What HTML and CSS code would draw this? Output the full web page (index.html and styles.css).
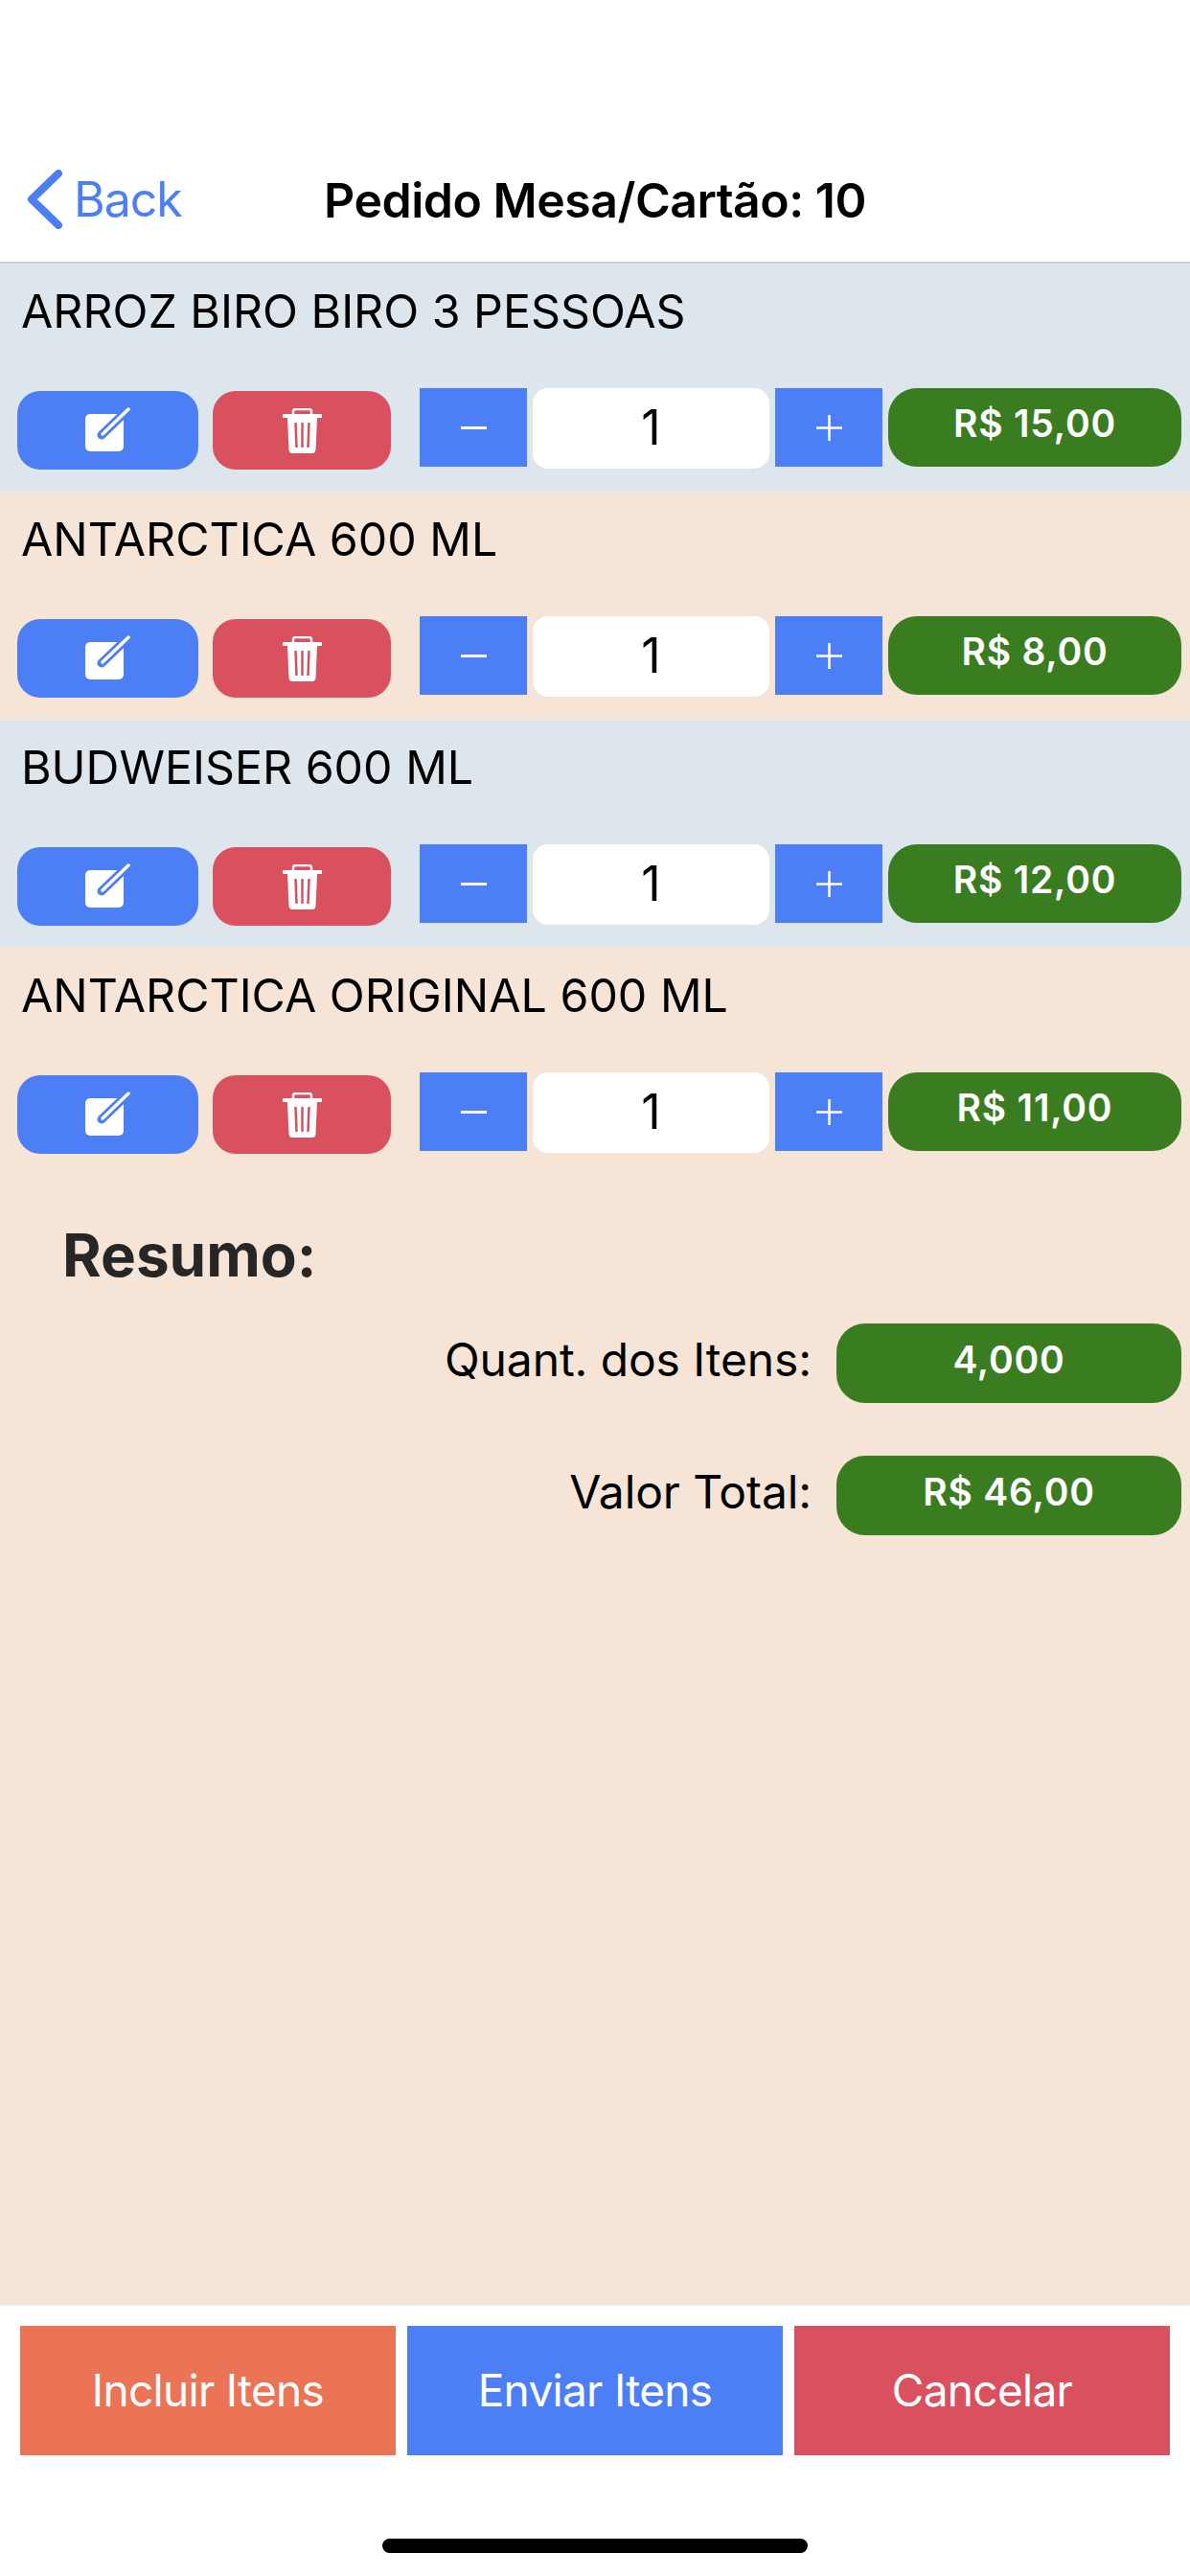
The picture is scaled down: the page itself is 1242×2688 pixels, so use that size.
FILE: index.html
```html
<!DOCTYPE html>
<html>
<head lang="pt-BR">
    <meta charset="UTF-8">
    <title>Pedido Mesa/Cartão</title>
    <link rel="stylesheet" href="styles.css">
</head>
<body>
    <svg class="defs" width="0" height="0">
        <symbol id="i-edit" viewBox="0 0 48 48">
            <rect x="0" y="7" width="40" height="39" rx="5" fill="#fff"/>
            <path d="M17 29L44 3" stroke="#4c7ef6" stroke-width="9" stroke-linecap="round" fill="none"/>
            <path d="M18 28L45 2" stroke="#fff" stroke-width="3.500" stroke-linecap="round" fill="none"/>
        </symbol>
        <symbol id="i-trash" viewBox="0 0 41 47">
            <path d="M11 7V3.500Q11 1 13.500 1H27.500Q30 1 30 3.500V7" stroke="#fff" stroke-width="2.500" fill="none"/>
            <rect x="0" y="6" width="41" height="4" rx="1" fill="#fff"/>
            <path d="M5 10H36L34.500 43Q34.300 47 31 47H10Q6.700 47 6.500 43Z" fill="#fff"/>
            <path d="M13.500 15L14.500 41M20.500 15V41M27.500 15L26.500 41" stroke="#d9505f" stroke-width="2.500" fill="none"/>
        </symbol>
        <symbol id="i-minus" viewBox="0 0 27 3">
            <rect width="27" height="3" fill="#fff"/>
        </symbol>
        <symbol id="i-plus" viewBox="0 0 27 27">
            <path d="M0 13.500H27M13.500 0V27" stroke="#fff" stroke-width="2.500"/>
        </symbol>
    </svg>

    <div id="page">
        <div class="nav">
            <a class="back">
                <svg width="38" height="62" viewBox="0 0 38 62"><path d="M33 4L5 31L33 58" stroke="#4c7ef6" stroke-width="8" stroke-linecap="round" stroke-linejoin="round" fill="none"/></svg>
                Back
            </a>
            <div class="title">Pedido Mesa/Cartão: 10</div>
        </div>

        <div class="content">
            <div class="item odd">
                <div class="name">ARROZ BIRO BIRO 3 PESSOAS</div>
                <div class="controls">
                    <span class="btn edit"><svg width="48" height="48"><use href="#i-edit"/></svg></span>
                    <span class="btn del"><svg width="41" height="47"><use href="#i-trash"/></svg></span>
                    <span class="step minus"><svg width="27" height="3"><use href="#i-minus"/></svg></span>
                    <span class="qty">1</span>
                    <span class="step plus"><svg width="27" height="27"><use href="#i-plus"/></svg></span>
                    <span class="price">R$ 15,00</span>
                </div>
            </div>
            <div class="item">
                <div class="name">ANTARCTICA 600 ML</div>
                <div class="controls">
                    <span class="btn edit"><svg width="48" height="48"><use href="#i-edit"/></svg></span>
                    <span class="btn del"><svg width="41" height="47"><use href="#i-trash"/></svg></span>
                    <span class="step minus"><svg width="27" height="3"><use href="#i-minus"/></svg></span>
                    <span class="qty">1</span>
                    <span class="step plus"><svg width="27" height="27"><use href="#i-plus"/></svg></span>
                    <span class="price">R$ 8,00</span>
                </div>
            </div>
            <div class="item odd">
                <div class="name">BUDWEISER 600 ML</div>
                <div class="controls">
                    <span class="btn edit"><svg width="48" height="48"><use href="#i-edit"/></svg></span>
                    <span class="btn del"><svg width="41" height="47"><use href="#i-trash"/></svg></span>
                    <span class="step minus"><svg width="27" height="3"><use href="#i-minus"/></svg></span>
                    <span class="qty">1</span>
                    <span class="step plus"><svg width="27" height="27"><use href="#i-plus"/></svg></span>
                    <span class="price">R$ 12,00</span>
                </div>
            </div>
            <div class="item">
                <div class="name">ANTARCTICA ORIGINAL 600 ML</div>
                <div class="controls">
                    <span class="btn edit"><svg width="48" height="48"><use href="#i-edit"/></svg></span>
                    <span class="btn del"><svg width="41" height="47"><use href="#i-trash"/></svg></span>
                    <span class="step minus"><svg width="27" height="3"><use href="#i-minus"/></svg></span>
                    <span class="qty">1</span>
                    <span class="step plus"><svg width="27" height="27"><use href="#i-plus"/></svg></span>
                    <span class="price">R$ 11,00</span>
                </div>
            </div>

            <div class="summary">
                <h2>Resumo:</h2>
                <div class="line">
                    <span class="label">Quant. dos Itens:</span>
                    <span class="total">4,000</span>
                </div>
                <div class="line">
                    <span class="label">Valor Total:</span>
                    <span class="total">R$ 46,00</span>
                </div>
            </div>
        </div>

        <div class="footer">
            <div class="actions">
                <a class="orange">Incluir Itens</a>
                <a class="blue">Enviar Itens</a>
                <a class="red">Cancelar</a>
            </div>
            <div class="home"></div>
        </div>
    </div>
</body>
</html>
```

FILE: styles.css
```css
*{
    margin: 0;
    padding: 0;
    box-sizing: border-box;
}
body{
    background: #fff;
    font-family: Inter, "Liberation Sans", sans-serif;
    color: #000;
}
.defs{
    display: block;
    height: 0;
}
#page{
    width: 1242px;
    height: 2688px;
    display: flex;
    flex-direction: column;
}

/* nav bar */
.nav{
    height: 275px;
    padding-top: 160px;
    display: grid;
    grid-template-columns: 1fr auto 1fr;
    align-items: start;
    border-bottom: 2px solid #ccd1d6;
}
.back{
    display: flex;
    align-items: center;
    gap: 11px;
    height: 96px;
    padding-left: 28px;
    font-size: 50px;
    letter-spacing: -1px;
    color: #4c7ef6;
}
.title{
    height: 96px;
    line-height: 98px;
    font-size: 50px;
    font-weight: 600;
    letter-spacing: -0.5px;
}

/* order rows */
.content{
    flex: 1;
    background: #f6e4d7;
}
.item{
    height: 238px;
    padding: 20px 9px 0 18px;
}
.item.odd{
    background: #dde5ed;
}
.name{
    height: 110px;
    padding-left: 4px;
    line-height: 60px;
    font-size: 48.300px;
}
.controls{
    display: flex;
    align-items: flex-start;
}
.btn{
    height: 82px;
    margin-top: 3px;
    border-radius: 24px;
    display: flex;
    align-items: center;
    justify-content: center;
}
.edit{
    width: 189px;
    margin-right: 15px;
    background: #4c7ef6;
}
.del{
    width: 186px;
    margin-right: 30px;
    background: #d9505f;
}
.step{
    width: 112px;
    height: 82px;
    background: #4c7ef6;
    display: flex;
    align-items: center;
    justify-content: center;
}
.qty{
    width: 247px;
    height: 84px;
    margin: 0 6px;
    line-height: 82px;
    background: #fff;
    border-radius: 16px;
    text-align: center;
    font-size: 50px;
}
.price{
    width: 306px;
    height: 82px;
    margin-left: 6px;
    line-height: 74px;
    background: #3a7d20;
    border-radius: 30px;
    text-align: center;
    color: #fff;
    font-size: 39px;
    font-weight: 600;
    letter-spacing: 0.800px;
}

/* resumo */
.summary{
    padding: 37px 9px 0 65px;
}
.summary h2{
    height: 117px;
    line-height: 92px;
    font-size: 62px;
    font-weight: 700;
    color: #262626;
}
.line{
    display: flex;
    justify-content: flex-end;
    align-items: center;
    margin-bottom: 55px;
    gap: 26px;
}
.label{
    padding-bottom: 8px;
    font-size: 48px;
    letter-spacing: -0.100px;
}
.total{
    width: 360px;
    height: 83px;
    line-height: 76px;
    background: #3a7d20;
    border-radius: 30px;
    text-align: center;
    color: #fff;
    font-size: 39px;
    font-weight: 600;
    letter-spacing: 0.800px;
}

/* bottom buttons */
.footer{
    height: 284px;
    border-top: 2px solid #e9e9e9;
}
.actions{
    display: flex;
    gap: 12px;
    padding: 21px 21px 0;
}
.actions a{
    flex: 1;
    height: 135px;
    line-height: 135px;
    text-align: center;
    color: #fff;
    font-size: 46px;
    letter-spacing: -0.700px;
}
.orange{
    background: #ea7455;
}
.blue{
    background: #4c7ef6;
}
.red{
    background: #d9505f;
}
.home{
    width: 444px;
    height: 15px;
    margin: 87px auto 0;
    background: #000;
    border-radius: 8px;
}
```
